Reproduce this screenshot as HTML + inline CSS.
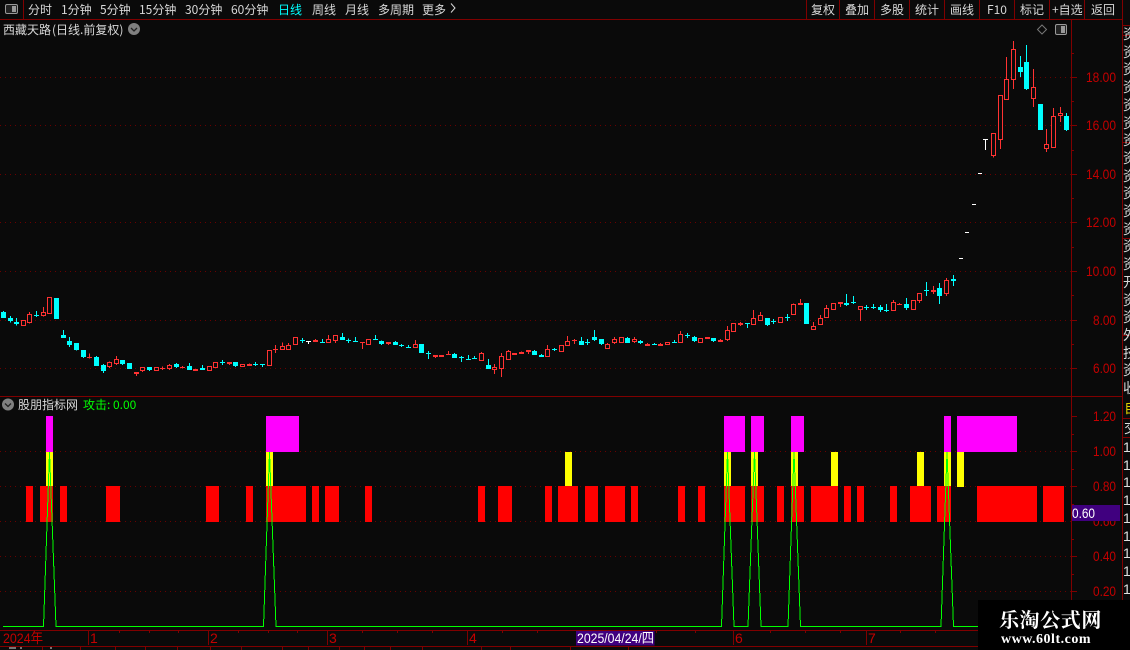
<!DOCTYPE html>
<html><head><meta charset="utf-8"><style>
html,body{margin:0;padding:0;background:#0a0a0a;width:1130px;height:650px;overflow:hidden}
svg{position:absolute;left:0;top:0;display:block}
.z{font-family:"WenQuanYi Zen Hei","Noto Sans CJK SC",sans-serif;font-size:12px}
.t{fill:#d8d8d8}
.a{font-family:"Liberation Sans",sans-serif;font-size:14px;fill:#c40000}
.b{font-family:"Liberation Sans","WenQuanYi Zen Hei",sans-serif;font-size:14px;fill:#c40000}
#side{position:absolute;left:1123px;top:26px;width:7px;height:390px;overflow:hidden;font-family:"WenQuanYi Zen Hei","Noto Sans CJK SC",sans-serif;font-size:14px;line-height:17.7px;color:#d8d8d8;white-space:nowrap}
#side2{position:absolute;left:1123px;top:439px;width:7px;height:160px;overflow:hidden;font-family:"Liberation Sans",sans-serif;font-size:14px;line-height:17.7px;color:#e0e0e0;white-space:nowrap}
#wm{position:absolute;left:978px;top:600px;width:152px;height:50px;background:#000}
#wm1{position:absolute;left:21px;top:7px;font-family:"Noto Serif CJK SC",serif;font-weight:700;font-size:20px;line-height:24px;letter-spacing:.6px;color:#fff;white-space:nowrap}
#wm2{position:absolute;left:23px;top:32px;font-family:"Liberation Serif",serif;font-weight:700;font-size:14px;line-height:16px;letter-spacing:.5px;color:#fff;white-space:nowrap}
</style></head><body>
<svg id="s" width="1130" height="650" viewBox="0 0 1130 650" xmlns="http://www.w3.org/2000/svg">
<g id="grid" shape-rendering="crispEdges" stroke="#6a0000" stroke-dasharray="1 4" stroke-width="1">
<path d="M0 77.5H1071M0 125.5H1071M0 174.5H1071M0 222.5H1071M0 271.5H1071M0 320.5H1071M0 368.5H1071M0 451.5H1071M0 486.5H1071M0 521.5H1071M0 556.5H1071M0 591.5H1071"/>
</g>
<g id="ch" shape-rendering="crispEdges"></g>
<g fill="#f0f" shape-rendering="crispEdges"><rect x="46" y="416" width="7" height="36"/><rect x="266" y="416" width="33" height="36"/><rect x="724" y="416" width="21" height="36"/><rect x="751" y="416" width="13" height="36"/><rect x="791" y="416" width="13" height="36"/><rect x="944" y="416" width="7" height="36"/><rect x="957" y="416" width="60" height="36"/></g>
<g fill="#ff0" shape-rendering="crispEdges"><rect x="46" y="452" width="7" height="35"/><rect x="266" y="452" width="7" height="35"/><rect x="565" y="452" width="7" height="35"/><rect x="724" y="452" width="7" height="35"/><rect x="751" y="452" width="7" height="35"/><rect x="791" y="452" width="7" height="35"/><rect x="831" y="452" width="7" height="35"/><rect x="917" y="452" width="7" height="35"/><rect x="944" y="452" width="7" height="35"/><rect x="957" y="452" width="7" height="35"/></g>
<g fill="#f00" shape-rendering="crispEdges"><rect x="26" y="486" width="7" height="36"/><rect x="40" y="486" width="13" height="36"/><rect x="60" y="486" width="7" height="36"/><rect x="106" y="486" width="14" height="36"/><rect x="206" y="486" width="13" height="36"/><rect x="246" y="486" width="7" height="36"/><rect x="266" y="486" width="40" height="36"/><rect x="312" y="486" width="7" height="36"/><rect x="325" y="486" width="14" height="36"/><rect x="365" y="486" width="7" height="36"/><rect x="478" y="486" width="7" height="36"/><rect x="498" y="486" width="14" height="36"/><rect x="545" y="486" width="7" height="36"/><rect x="558" y="486" width="20" height="36"/><rect x="585" y="486" width="13" height="36"/><rect x="605" y="486" width="20" height="36"/><rect x="631" y="486" width="7" height="36"/><rect x="678" y="486" width="7" height="36"/><rect x="698" y="486" width="7" height="36"/><rect x="724" y="486" width="21" height="36"/><rect x="751" y="486" width="13" height="36"/><rect x="777" y="486" width="7" height="36"/><rect x="791" y="486" width="13" height="36"/><rect x="811" y="486" width="27" height="36"/><rect x="844" y="486" width="7" height="36"/><rect x="857" y="486" width="7" height="36"/><rect x="890" y="486" width="7" height="36"/><rect x="910" y="486" width="21" height="36"/><rect x="937" y="486" width="14" height="36"/><rect x="977" y="486" width="60" height="36"/><rect x="1043" y="486" width="21" height="36"/></g>
<path fill="none" stroke="#0f0" stroke-width="1" shape-rendering="crispEdges" d="M3 626.5H43.5L49.5 452L56 626.5H263.5L269.5 452L276 626.5H721.5L727.5 452L734 626.5H748L754.5 452L761 626.5H788L794 452L800.5 626.5H941L947 452L953.500 626.5H1071"/>
<g fill="none" stroke="#800000" stroke-width="1" shape-rendering="crispEdges">
<path d="M0 19.5H1122M0 396.5H1122M0 630.5H1122M0 646.5H1130"/>
<path d="M1071.500 19V630M1122.500 0V630"/>
<path d="M23.500 0V19M806.500 0V19M839.500 0V19M874.500 0V19M909.500 0V19M944.500 0V19M979.500 0V19M1014.500 0V19M1049.500 0V19M1084.500 0V19"/>
<path d="M1071 77.500h6M1071 125.500h6M1071 174.500h6M1071 222.500h6M1071 271.500h6M1071 320.500h6M1071 368.500h6M1071 101.500h3M1071 150.500h3M1071 198.500h3M1071 247.500h3M1071 295.500h3M1071 344.500h3M1071 53.500h3"/>
<path d="M1071 416.500h6M1071 451.500h6M1071 486.500h6M1071 556.500h6M1071 591.500h6M1071 434.500h3M1071 469.500h3M1071 504.500h3M1071 539.500h3M1071 574.500h3"/>
<path d="M1122 25.500h8M1122 35.500h8M1122 142.500h8M1122 238.500h8M1122 335.500h8M1122 418.500h8M1122 437.500h8"/>
<path d="M88.500 631V645M208.500 631V645M327.500 631V645M467.500 631V645M733.500 631V645M866.500 631V645"/>
<path d="M119.500 631v2M149.500 631v2M178.500 631v2M238.500 631v2M268.500 631v2M297.500 631v2M362.500 631v2M397.500 631v2M432.500 631v2M502.500 631v2M537.500 631v2M656.500 631v2M695.500 631v2M770.500 631v2M805.500 631v2M840.500 631v2M900.500 631v2M935.500 631v2"/>
<path d="M42.500 647V650M80.500 647V650M115.500 647V650M145.500 647V650M177.500 647V650M210.500 647V650M241.500 647V650M282.500 647V650M308.500 647V650M339.500 647V650M364.500 647V650M390.500 647V650M422.500 647V650M481.500 647V650M510.500 647V650M570.500 647V650M628.500 647V650"/>
</g>
<path d="M9 648h7M20 648h2M50 648h2" stroke="#ddd" stroke-width="1" shape-rendering="crispEdges"/>
<!-- toolbar icon -->
<rect x="5.500" y="4.500" width="12" height="9" rx="1.500" fill="#222" stroke="#999"/><rect x="12" y="6" width="4" height="6" fill="#999"/>
<rect x="1055.500" y="24.500" width="11" height="10" rx="1.500" fill="#222" stroke="#999"/><rect x="1061" y="26" width="4" height="7" fill="#999"/>
<path d="M1042 25L1046.500 29.500L1042 34L1037.500 29.500Z" fill="none" stroke="#777"/>
<circle cx="134" cy="29" r="6" fill="#808080"/><path d="M131 28l3 3 3-3" fill="none" stroke="#222" stroke-width="1.300"/>
<circle cx="8" cy="404.500" r="6" fill="#808080"/><path d="M5 403.500l3 3 3-3" fill="none" stroke="#222" stroke-width="1.300"/>
<!-- toolbar text -->
<g class="z t">
<text x="28" y="14">分时</text><text x="61" y="14">1分钟</text><text x="100" y="14">5分钟</text><text x="139" y="14">15分钟</text><text x="185" y="14">30分钟</text><text x="231" y="14">60分钟</text>
<text x="278" y="14" style="fill:#0ff">日线</text><text x="312" y="14">周线</text><text x="345" y="14">月线</text><text x="378" y="14">多周期</text><text x="422" y="14">更多</text>
<text x="811" y="14">复权</text><text x="845" y="14">叠加</text><text x="880" y="14">多股</text><text x="915" y="14">统计</text><text x="950" y="14">画线</text><text x="987" y="14">F10</text><text x="1020" y="14">标记</text><text x="1052" y="14">+自选</text><text x="1091" y="14">返回</text>
<text x="3" y="34">西藏天路</text><text x="52" y="34">(日线.前复权)</text>
<text x="18" y="409">股朋指标网</text>
<text x="83" y="409" style="fill:#0f0">攻击:</text><text x="113" y="409" style="fill:#0f0">0.00</text>
</g>
<path d="M451 3.500L455 8L451 12.500" fill="none" stroke="#d8d8d8"/>
<!-- axis labels -->
<g class="a">
<text x="1086" y="82" textLength="30" lengthAdjust="spacingAndGlyphs">18.00</text>
<text x="1086" y="130" textLength="30" lengthAdjust="spacingAndGlyphs">16.00</text>
<text x="1086" y="179" textLength="30" lengthAdjust="spacingAndGlyphs">14.00</text>
<text x="1086" y="227" textLength="30" lengthAdjust="spacingAndGlyphs">12.00</text>
<text x="1086" y="276" textLength="30" lengthAdjust="spacingAndGlyphs">10.00</text>
<text x="1093" y="325" textLength="23" lengthAdjust="spacingAndGlyphs">8.00</text>
<text x="1093" y="373" textLength="23" lengthAdjust="spacingAndGlyphs">6.00</text>
<text x="1093" y="421" textLength="23" lengthAdjust="spacingAndGlyphs">1.20</text>
<text x="1093" y="456" textLength="23" lengthAdjust="spacingAndGlyphs">1.00</text>
<text x="1093" y="491" textLength="23" lengthAdjust="spacingAndGlyphs">0.80</text>
<text x="1093" y="526" textLength="23" lengthAdjust="spacingAndGlyphs">0.60</text>
<text x="1093" y="561" textLength="23" lengthAdjust="spacingAndGlyphs">0.40</text>
<text x="1093" y="596" textLength="23" lengthAdjust="spacingAndGlyphs">0.20</text>
</g>
<rect x="1072" y="505" width="48" height="16" fill="#40007f" shape-rendering="crispEdges"/>
<text x="1072" y="518" font-family="Liberation Sans" font-size="14" fill="#fff" textLength="23" lengthAdjust="spacingAndGlyphs">0.60</text>
<!-- time axis -->
<g class="b">
<text x="3" y="643" textLength="40" lengthAdjust="spacingAndGlyphs">2024年</text>
<text x="90" y="643">1</text><text x="210" y="643">2</text><text x="329" y="643">3</text><text x="469" y="643">4</text><text x="735" y="643">6</text><text x="868" y="643">7</text>
</g>
<rect x="576" y="631" width="78.500" height="14.500" fill="#40007f" shape-rendering="crispEdges"/>
<text x="577" y="643" font-family="Liberation Sans,WenQuanYi Zen Hei,sans-serif" font-size="14" fill="#fff" textLength="77" lengthAdjust="spacingAndGlyphs">2025/04/24/四</text>
<text x="1124" y="413" class="z" style="fill:#e0d000;font-size:14px">自</text>
<text x="1124" y="433" class="z" style="fill:#ddd;font-size:14px">交</text>
</svg>
<div id="side">资<br>资<br>资<br>资<br>资<br>资<br>资<br>资<br>资<br>资<br>资<br>资<br>资<br>资<br>开<br>资<br>资<br>外<br>技<br>资<br>收</div>
<div id="side2">1<br>1<br>1<br>1<br>1<br>1<br>1<br>1<br>1</div>
<div id="wm"><div id="wm1">乐淘公式网</div><div id="wm2">www.60lt.com</div></div>
<script>
var segs=[[285,[
'c81,99,78,99','c99,107,93,113','c112,117,99,122','h106,122','h88,114,81,116','c91,94,78,96','h82,92,66,95','h37,86','c39,102',
'c151,159,135,159','c168,180,156,186','c174,195,174,197','c195,216,195,219','r217,219,205,221','c216,243,213,243','c240,258,237,264','h232,246,229,249','h222,237,213,240','c225,237,225,240','c234,252',
'r262,267,262,273','h247,257,247,261','c247,255,247,258','h247,257','r249,252,245,255','h240,251,237,255','c237,246,234,249','r246,249,243,251','c243,255,234,255','r252,258','c249,255,240,255','h244,258','h232,248','c231,234,225,240','r232,236,232,240','c231,243,231,246','h238,245','r238,243,235,243','c236,239,231,243','c237,239,237,246','h195,243','r191,194,180,204']],
[320,['h79,89,67,89','h76,89,69,89','h52,74','c59,62,54,69','w63,65,63,72','r60,65,57,65','c66,68,57,68','h58,68,45,68','h46,62,46,69','c51,60,39,60','c60,63,56,69','c64,66,51,66','r67,70,67,87','h58,74','c58,60,45,60','c63,72,61,75','r67,72,67,75','c66,75,63,75','c75,78,72,81','c81,83,75,83','h72,83,60,83','c72,99','c99,102,93,117','r106,111,106,114','r106,111','r103,105,93,105','c102,114,99,114','c112,115,108,126','c118,120,105,120','c113,115,108,115','h100,122,96,122','c135,147,117,147','h141,149,132,162','h108,146,99,171','h93,119,90,119','r99,104','r97,101,95,101','h91,97,91,102','c93,105,90,105','c106,110,102,110','h88,110,75,110','c87,90,84,93']],
[310,['h106,125','h93,107,78,107','r90,93,87,102','c93,105,81,105','c95,98,87,105','c81,90,60,93','c87,102,87,105','h102,116,99,116','h88,99,81,102','h82,98','c84,99,81,99','h87,95,81,99','c93,99,90,102','r102,107,99,107','c102,104,99,104','r102,107,99,107','h97,104','c97,99,90,99','h73,98,63,98','c75,78,69,84','c81,93,78,96','h85,98','r81,87','c84,93,84,96','r90,95,87,95','h61,90,48,93','h39,67','r39,44,36,48','c39,42,39,54','h25,44,0,44','h16,32,6,32','c24,45,24,48','c33,36,27,42','h21,38','c21,24,12,33']],
[260,['h133,164,130,164','r129,134,117,134','c129,192','h199,209,186,209','h175,194,165,194','h145,174,135,174','h130,149','r126,131,126,141','c129,135,102,138','c126,130,108,132','h139,149,139,183','c140,143,135,150','c140,143,132,147','c141,150,135,156','c151,154,132,156','h127,152,120,152','r132,135,129,135','c132,144,114,150','h121,149','h100,122,100,129','c90,93,66,108','r90,96,78,102','c84,108,69,132','h61,101,54,108','c57,63,45,78']]];
var ns='http://www.w3.org/2000/svg',g=document.getElementById('ch'),i=0;
function R(x,y,w,h,f,st){var e=document.createElementNS(ns,'rect');e.setAttribute('x',x);e.setAttribute('y',y);e.setAttribute('width',w);e.setAttribute('height',Math.max(h,1));
if(st){e.setAttribute('fill','#0a0a0a');e.setAttribute('stroke',st);}else e.setAttribute('fill',f);g.appendChild(e);}
function C(cx,t,a,b,hi,lo){var col=t=='c'?'#0ff':t=='w'?'#fff':'#ff3232';
var c=Math.floor(cx);
if(hi!==undefined)R(c,hi,1,lo-hi,col);
var l=c-2;
if(t=='h'){R(l+.5,Math.round(a)+.5,4,Math.max(Math.round(b)-Math.round(a)-1,1),null,col);}
else R(l,Math.round(a),5,Math.max(Math.round(b)-Math.round(a),1),col);}
segs.forEach(function(s){s[1].forEach(function(d){var t=d[0],v=d.slice(1).split(',').map(function(n){return s[0]+n/3});
C(3.4+6.641*i,t,v[0],v[1],v[2],v[3]);i++;});});
// dashes
[[959,258],[965,232],[972,204],[978,173]].forEach(function(p){R(p[0],p[1],4,1,'#fff');});
R(983,139,5,1,'#fff');R(985,139,1,11,'#fff');
[[991,'h',133,155.700,133,157.700],[998,'h',95,140,95,149],[1004.500,'h',79,100,57,100],[1011,'h',49,80,41,89],[1018,'c',67,72,56,77],[1024,'c',62,89,45,90],[1031,'h',87,99,69,107],[1038,'c',104,130],[1044,'h',144,149,129,152],[1051,'h',116,148,108,148],[1058,'h',113,116,107,122],[1064,'c',116,130,113,131]].forEach(function(p){C(p[0]+2,p[1],p[2],p[3],p[4],p[5]);});
</script>
</body></html>
